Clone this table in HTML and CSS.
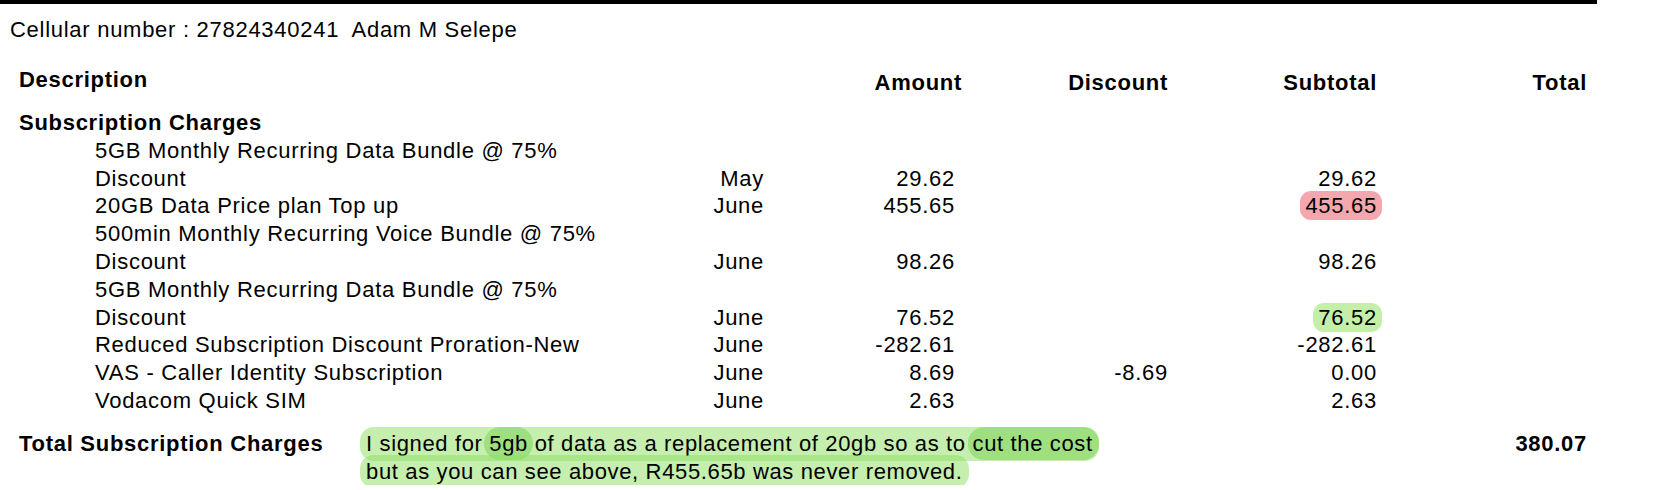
FILE: index.html
```html
<!DOCTYPE html>
<html lang="en">
<head>
<meta charset="utf-8">
<title>Statement</title>
<link rel="stylesheet" href="styles.css">
</head>
<body>
<div class="page">
  <div class="rule"></div>
  <div class="cell-line">Cellular number : 27824340241&nbsp; Adam M Selepe</div>

  <div class="charges">
    <div class="hdr desc-h">Description</div>
    <div class="hdr"></div>
    <div class="hdr num amount-h">Amount</div>
    <div class="hdr num">Discount</div>
    <div class="hdr num">Subtotal</div>
    <div class="hdr num">Total</div>

    <div class="section">Subscription Charges</div>

    <div class="item">5GB Monthly Recurring Data Bundle @ 75% Discount</div>
    <div class="mon">May</div>
    <div class="num">29.62</div>
    <div class="num"></div>
    <div class="num">29.62</div>
    <div class="num"></div>

    <div class="item">20GB Data Price plan Top up</div>
    <div class="mon">June</div>
    <div class="num">455.65</div>
    <div class="num"></div>
    <div class="num"><span class="mark mark-red">455.65</span></div>
    <div class="num"></div>

    <div class="item">500min Monthly Recurring Voice Bundle @ 75% Discount</div>
    <div class="mon">June</div>
    <div class="num">98.26</div>
    <div class="num"></div>
    <div class="num">98.26</div>
    <div class="num"></div>

    <div class="item">5GB Monthly Recurring Data Bundle @ 75% Discount</div>
    <div class="mon">June</div>
    <div class="num">76.52</div>
    <div class="num"></div>
    <div class="num"><span class="mark mark-green">76.52</span></div>
    <div class="num"></div>

    <div class="item">Reduced Subscription Discount Proration-New</div>
    <div class="mon">June</div>
    <div class="num">-282.61</div>
    <div class="num"></div>
    <div class="num">-282.61</div>
    <div class="num"></div>

    <div class="item">VAS - Caller Identity Subscription</div>
    <div class="mon">June</div>
    <div class="num">8.69</div>
    <div class="num">-8.69</div>
    <div class="num">0.00</div>
    <div class="num"></div>

    <div class="item">Vodacom Quick SIM</div>
    <div class="mon">June</div>
    <div class="num">2.63</div>
    <div class="num"></div>
    <div class="num">2.63</div>
    <div class="num"></div>
  </div>

  <div class="totals">
    <div class="total-label">Total Subscription Charges</div>
    <div class="note">
      <span class="note-line">I signed for <span class="hl hl-5gb">5gb</span> of data as a replacement of 20gb so as to <span class="hl hl-cut">cut the cost</span></span>
      <span class="note-line">but as you can see above, R455.65b was never removed.</span>
    </div>
    <div class="total-value">380.07</div>
  </div>
</div>
</body>
</html>
```

FILE: styles.css
```css
html, body {
  margin: 0;
  padding: 0;
  background: #ffffff;
}

body {
  font-family: "Liberation Sans", Arial, sans-serif;
  font-size: 22px;
  letter-spacing: 0.72px;
  line-height: 27.8px;
  color: #000000;
}

.page {
  width: 1662px;
}

.rule {
  width: 1597px;
  height: 4px;
  background: #000000;
}

.cell-line {
  margin-top: 12px;
  padding-left: 10px;
  white-space: nowrap;
}

.charges {
  display: grid;
  grid-template-columns: 645px 100px 191px 213px 209px 210px;
  align-items: end;
  margin-left: 19px;
  margin-top: 21.8px;
}

.hdr {
  font-weight: bold;
}

.hdr.num {
  padding-top: 3px;
}

.desc-h {
  align-self: start;
}

.amount-h {
  margin-right: -7px;
}

.section {
  grid-column: 1 / -1;
  font-weight: bold;
  margin-top: 12.7px;
}

.item {
  padding-left: 76px;
  padding-right: 40px;
}

.mon,
.num {
  text-align: right;
  white-space: nowrap;
}

.mark {
  padding: 2px 5px;
  margin-right: -5px;
  border-radius: 11px;
}

.mark-red {
  background: #f4a7ae;
}

.mark-green {
  background: #c4efa8;
}

.totals {
  display: grid;
  grid-template-columns: 347px 1fr 213px;
  width: 1568px;
  margin-left: 19px;
  margin-top: 15.5px;
}

.total-label {
  font-weight: bold;
  white-space: nowrap;
}

.note {
  display: flex;
  flex-direction: column;
  align-items: flex-start;
  white-space: nowrap;
  letter-spacing: 0.64px;
}

.note-line {
  padding: 3px 6px;
  margin: -3.2px 0 -3.2px -6px;
  background: rgba(140, 222, 96, 0.5);
  border-radius: 14px;
}

.hl {
  padding: 4px 5px;
  margin: 0 -5px;
  border-radius: 18px;
  background: rgba(110, 205, 70, 0.45);
}

.hl-cut {
  margin-right: -6px;
  padding-right: 6px;
  border-radius: 16px;
}

.total-value {
  font-weight: bold;
  text-align: right;
}
```
